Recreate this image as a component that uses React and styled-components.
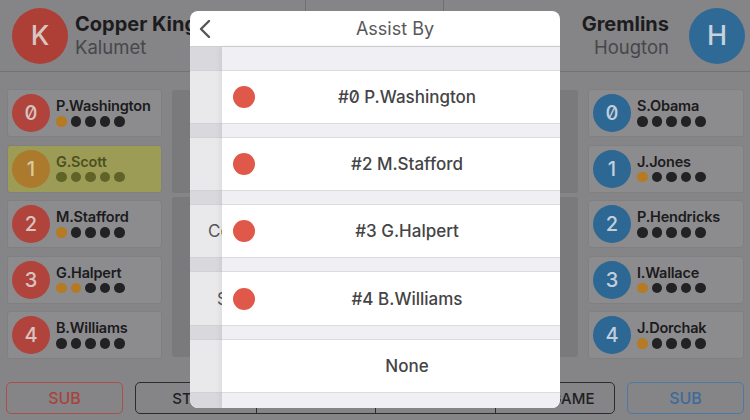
import React from "react";
import styled, { createGlobalStyle } from "styled-components";

const GlobalStyle = createGlobalStyle`
  html, body { margin: 0; padding: 0; }
  body {
    width: 750px; height: 420px; overflow: hidden;
    background: #858487;
    font-family: Inter, "DejaVu Sans", sans-serif;
    font-feature-settings: "zero" 1;
  }
`;

const Screen = styled.div`
  position: relative;
  width: 750px;
  height: 420px;
  display: flex;
  flex-direction: column;
  background: #858487;
`;

const Header = styled.header`
  height: 71px;
  border-bottom: 1px solid #727174;
  display: grid;
  grid-template-columns: 190px 1fr 190px;
  box-sizing: content-box;
`;

const Team = styled.div`
  display: flex;
  align-items: center;
  gap: ${(p) => (p.$right ? "20px" : "7px")};
  flex-direction: ${(p) => (p.$right ? "row-reverse" : "row")};
  padding: ${(p) => (p.$right ? "0 5px 0 0" : "0 0 0 12px")};
  overflow: hidden;
  white-space: nowrap;
`;

const Badge = styled.div`
  flex: none;
  width: 56px;
  height: 56px;
  border-radius: 50%;
  background: ${(p) => p.$bg};
  color: ${(p) => p.$fg};
  display: flex;
  align-items: center;
  justify-content: center;
  font-size: 27px;
  font-weight: 500;
`;

const TeamText = styled.div`
  display: flex;
  flex-direction: column;
  align-items: ${(p) => (p.$right ? "flex-end" : "flex-start")};
  line-height: 23px;
  margin-top: 1px;
`;

const TeamName = styled.div`
  font-size: 20px;
  font-weight: 700;
  color: #1c1c1e;
`;

const TeamCity = styled.div`
  font-size: 18.5px;
  color: #47474a;
`;

const Scoreboard = styled.div`
  display: grid;
  grid-template-columns: 115px 138px 1fr;
`;

const ScoreCell = styled.div`
  border-left: ${(p) => (p.$line ? "1px solid #6f6e71" : "none")};
`;

const Main = styled.main`
  display: grid;
  grid-template-columns: 155px 1fr 156px;
  column-gap: 10px;
  padding: 17px 6px 0 7px;
  height: 270px;
`;

const Roster = styled.div`
  display: flex;
  flex-direction: column;
  gap: 7.5px;
`;

const Card = styled.div`
  height: 48px;
  box-sizing: border-box;
  border: 1px solid #807f82;
  border-radius: 3px;
  background: ${(p) => (p.$active ? "#9c9c56" : "#8c8b8e")};
  display: flex;
  align-items: center;
  gap: 6px;
  padding-left: 4px;
`;

const Num = styled.div`
  flex: none;
  width: 38px;
  height: 38px;
  border-radius: 50%;
  background: ${(p) => p.$bg};
  color: ${(p) => p.$fg};
  display: flex;
  align-items: center;
  justify-content: center;
  font-size: 20px;
  font-weight: 500;
`;

const PlayerInfo = styled.div`
  display: flex;
  flex-direction: column;
  gap: 2px;
  margin-top: -2px;
`;

const PlayerName = styled.div`
  font-size: 14.5px;
  font-weight: 600;
  line-height: 17px;
  color: ${(p) => (p.$active ? "#4c501f" : "#1b1b1d")};
  letter-spacing: -0.2px;
`;

const Dots = styled.div`
  display: flex;
  gap: 4px;
`;

const Dot = styled.span`
  width: 10.5px;
  height: 10.5px;
  border-radius: 50%;
  background: ${(p) => p.$c};
`;

const Center = styled.div`
  display: flex;
  flex-direction: column;
  gap: 4px;
  padding-top: 1px;
`;

const Field = styled.div`
  height: ${(p) => p.$h}px;
  background: #7a797c;
  border-radius: 3px;
`;

const Footer = styled.footer`
  display: flex;
  gap: 12px;
  padding: 23px 6px 0 6px;
`;

const SideButton = styled.div`
  width: 117px;
  height: 32px;
  box-sizing: border-box;
  border: 1.5px solid ${(p) => p.$border};
  border-radius: 5px;
  color: ${(p) => p.$color};
  display: flex;
  align-items: center;
  justify-content: center;
  font-size: 16px;
  font-weight: 500;
`;

const Group = styled.div`
  width: 480px;
  height: 32px;
  box-sizing: border-box;
  border: 1.5px solid #2c2c2e;
  border-radius: 5px;
  display: grid;
  grid-template-columns: repeat(4, 1fr);
`;

const Segment = styled.div`
  border-left: ${(p) => (p.$first ? "none" : "1.5px solid #2c2c2e")};
  display: flex;
  align-items: center;
  justify-content: center;
  font-size: 15px;
  font-weight: 500;
  color: #1f1f21;
  white-space: nowrap;
`;

/* Modal */
const Modal = styled.div`
  position: absolute;
  left: 190px;
  top: 11px;
  width: 370px;
  height: 397px;
  background: #fff;
  border-radius: 8px;
  overflow: hidden;
  display: flex;
  flex-direction: column;
`;

const ModalHeader = styled.div`
  height: 36px;
  flex: none;
  box-sizing: border-box;
  border-bottom: 1px solid #cfcfd3;
  display: grid;
  grid-template-columns: 40px 1fr 0px;
  align-items: center;
`;

const Back = styled.div`
  display: flex;
  align-items: center;
  padding-left: 8px;
`;

const Title = styled.div`
  text-align: center;
  font-size: 18px;
  color: #58585a;
`;

const Body = styled.div`
  flex: 1;
  display: flex;
  min-height: 0;
`;

const Strip = styled.div`
  width: 32px;
  flex: none;
  overflow: hidden;
  display: flex;
  flex-direction: column;
`;

const Page = styled.div`
  width: 370px;
  flex: none;
  display: flex;
  flex-direction: column;
  box-shadow: -2px 0 5px rgba(0, 0, 0, 0.06);
`;

const Band = styled.div`
  height: ${(p) => p.$h}px;
  flex: none;
  background: ${(p) => (p.$dim ? "#d9d9dd" : "#efeff4")};
`;

const Row = styled.div`
  height: ${(p) => p.$h}px;
  flex: none;
  box-sizing: border-box;
  border-top: 1px solid #dcdce0;
  border-bottom: 1px solid #dcdce0;
  background: #ffffff;
  display: grid;
  grid-template-columns: 44px 1fr 44px;
  align-items: center;
`;

const StripRow = styled.div`
  height: ${(p) => p.$h}px;
  flex: none;
  box-sizing: border-box;
  border-top: 1px solid #d2d2d6;
  border-bottom: 1px solid #d2d2d6;
  background: #e9e9eb;
  display: flex;
  align-items: center;
  padding-left: ${(p) => p.$indent || 0}px;
  font-size: 17px;
  color: #555557;
  white-space: nowrap;
`;

const RedDot = styled.span`
  width: 22px;
  height: 22px;
  border-radius: 50%;
  background: #e05849;
  margin-left: 11px;
`;

const RowLabel = styled.div`
  grid-column: 2;
  text-align: center;
  font-size: 17px;
  font-weight: 500;
  color: #444446;
`;

const ORANGE = "#b57a22";
const DARK = "#222225";

const home = [
  { n: "0", name: "P.Washington", o: 1 },
  { n: "1", name: "G.Scott", o: 0, active: true },
  { n: "2", name: "M.Stafford", o: 1 },
  { n: "3", name: "G.Halpert", o: 2 },
  { n: "4", name: "B.Williams", o: 0 },
];

const away = [
  { n: "0", name: "S.Obama", o: 0 },
  { n: "1", name: "J.Jones", o: 1 },
  { n: "2", name: "P.Hendricks", o: 0 },
  { n: "3", name: "I.Wallace", o: 1 },
  { n: "4", name: "J.Dorchak", o: 1 },
];

function PlayerCard({ p, bg, fg }) {
  const active = p.active;
  return (
    <Card $active={active}>
      <Num $bg={active ? "#ac7a2c" : bg} $fg={active ? "#d9cba0" : fg}>
        {p.n}
      </Num>
      <PlayerInfo>
        <PlayerName $active={active}>{p.name}</PlayerName>
        <Dots>
          {[0, 1, 2, 3, 4].map((i) => (
            <Dot key={i} $c={active ? "#5f6327" : i < p.o ? ORANGE : DARK} />
          ))}
        </Dots>
      </PlayerInfo>
    </Card>
  );
}

const options = [
  { label: "#0 P.Washington", dot: true },
  { label: "#2 M.Stafford", dot: true },
  { label: "#3 G.Halpert", dot: true },
  { label: "#4 B.Williams", dot: true },
  { label: "None", dot: false },
];

const rowHeights = [54, 54, 54, 55, 54];
const stripText = ["", "", "Co", "S", ""];
const stripIndent = [0, 0, 18, 27, 0];

export default function App() {
  return (
    <>
      <GlobalStyle />
      <Screen>
        <Header>
          <Team>
            <Badge $bg="#ad3f36" $fg="#d8c6c3">K</Badge>
            <TeamText>
              <TeamName>Copper Kings</TeamName>
              <TeamCity>Kalumet</TeamCity>
            </TeamText>
          </Team>
          <Scoreboard>
            <ScoreCell />
            <ScoreCell $line />
            <ScoreCell $line />
          </Scoreboard>
          <Team $right>
            <Badge $bg="#2f6995" $fg="#c6d2dc">H</Badge>
            <TeamText $right>
              <TeamName>Gremlins</TeamName>
              <TeamCity>Hougton</TeamCity>
            </TeamText>
          </Team>
        </Header>

        <Main>
          <Roster>
            {home.map((p) => (
              <PlayerCard key={p.n} p={p} bg="#b0433b" fg="#d7c3c0" />
            ))}
          </Roster>
          <Center>
            <Field $h={103} />
            <Field $h={160} />
          </Center>
          <Roster>
            {away.map((p) => (
              <PlayerCard key={p.n} p={p} bg="#2d6793" fg="#c2cfdb" />
            ))}
          </Roster>
        </Main>

        <Footer>
          <SideButton $border="#a6514b" $color="#a7443d">SUB</SideButton>
          <Group>
            <Segment $first>STATS</Segment>
            <Segment>UNDO</Segment>
            <Segment>TIMEOUT</Segment>
            <Segment>END GAME</Segment>
          </Group>
          <SideButton $border="#4c7aa6" $color="#3c6b9a">SUB</SideButton>
        </Footer>

        <Modal>
          <ModalHeader>
            <Back>
              <svg width="14" height="20" viewBox="0 0 14 20">
                <polyline
                  points="11,2 3,10 11,18"
                  fill="none"
                  stroke="#555557"
                  strokeWidth="2.4"
                  strokeLinecap="round"
                  strokeLinejoin="round"
                />
              </svg>
            </Back>
            <Title>Assist By</Title>
          </ModalHeader>
          <Body>
            <Strip>
              <Band $h={23} $dim />
              {rowHeights.map((h, i) => (
                <React.Fragment key={i}>
                  <StripRow $h={h} $indent={stripIndent[i]}>
                    {stripText[i]}
                  </StripRow>
                  <Band $h={i === 4 ? 15 : 13} $dim />
                </React.Fragment>
              ))}
            </Strip>
            <Page>
              <Band $h={23} />
              {options.map((o, i) => (
                <React.Fragment key={o.label}>
                  <Row $h={rowHeights[i]}>
                    {o.dot ? <RedDot /> : <span />}
                    <RowLabel>{o.label}</RowLabel>
                  </Row>
                  <Band $h={i === 4 ? 15 : 13} />
                </React.Fragment>
              ))}
            </Page>
          </Body>
        </Modal>
      </Screen>
    </>
  );
}
